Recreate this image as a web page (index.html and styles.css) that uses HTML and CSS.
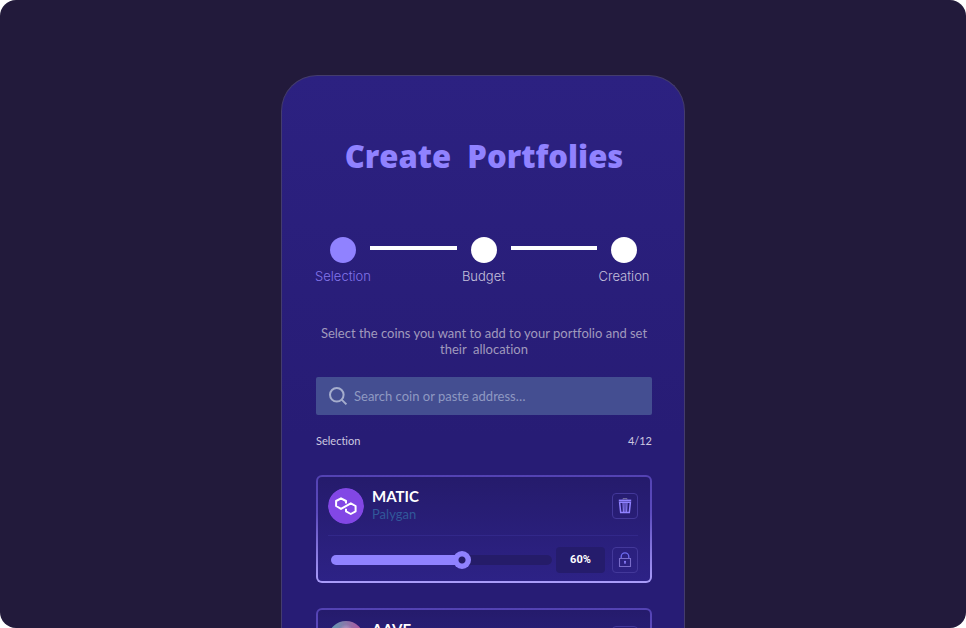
FILE: index.html
```html
<!DOCTYPE html>
<html lang="en">
<head>
<meta charset="utf-8">
<meta name="viewport" content="width=device-width, initial-scale=1">
<title>Create Portfolies</title>
<link rel="stylesheet" href="styles.css">
</head>
<body>
<div class="stage">
  <main class="panel">
    <h1 class="title">Create&nbsp; Portfolies</h1>

    <ol class="steps">
      <li class="step step-active"><span class="dot"></span><span class="step-label">Selection</span></li>
      <li class="bar" aria-hidden="true"></li>
      <li class="step"><span class="dot"></span><span class="step-label">Budget</span></li>
      <li class="bar" aria-hidden="true"></li>
      <li class="step"><span class="dot"></span><span class="step-label">Creation</span></li>
    </ol>

    <p class="intro">Select the coins you want to add to your portfolio and set their&nbsp; allocation</p>

    <label class="search">
      <svg class="search-icon" viewBox="0 0 18 18" aria-hidden="true"><circle cx="7.8" cy="7.8" r="6.8"/><path d="M12.6 12.6 17.4 17.4"/></svg>
      <input type="text" placeholder="Search coin or paste address…" aria-label="Search coin or paste address">
    </label>

    <div class="summary"><span>Selection</span><span>4/12</span></div>

    <section class="card">
      <div class="coin">
        <svg class="avatar" viewBox="0 0 36 36" aria-hidden="true">
          <circle cx="18" cy="18" r="18" fill="#8247e5"/>
          <path d="M18 15.4V13L13 10.3 8.1 13V18L13 20.9 22.8 15.3 27.6 18V23.3L22.8 26 18 23.3V20.8" fill="none" stroke="#fff" stroke-width="2" stroke-linejoin="round"/>
        </svg>
        <div class="names"><h2 class="symbol">MATIC</h2><p class="name">Palygan</p></div>
        <button class="icon-button" type="button" aria-label="Remove MATIC">
          <svg viewBox="0 0 14 16" aria-hidden="true"><path d="M5 1.5V.6h4v.9" fill="none" stroke="#76709f"/><path d="M.8 2.4h12.4" fill="none" stroke="#9082ff" stroke-width="1.6"/><path d="M1.6 4.2 2.7 14.6h8.6L12.4 4.2z" fill="none" stroke="#9082ff" stroke-width="1.5"/><path d="M5 4.2l.4 10.4M9 4.2l-.4 10.4M7 4.2v10.4" fill="none" stroke="#9082ff" stroke-width="1.1"/></svg>
        </button>
      </div>
      <div class="allocation">
        <input class="slider" type="range" min="0" max="100" value="60" aria-label="MATIC allocation">
        <output class="percent">60%</output>
        <button class="icon-button" type="button" aria-label="Lock MATIC">
          <svg viewBox="0 0 14 16" aria-hidden="true"><path d="M3.2 6.4V4.7a3.8 3.8 0 0 1 7.6 0v1.7" fill="none" stroke="#6e6cf0" stroke-width="1.3"/><path d="M1.5 6.5h11v8h-11z" fill="none" stroke="#796cc9" stroke-width="1.1"/><circle cx="7" cy="9.8" r="1" fill="#9082ff"/><path d="M7 10v2" stroke="#9082ff"/></svg>
        </button>
      </div>
    </section>

    <section class="card">
      <div class="coin">
        <span class="avatar avatar-aave"></span>
        <div class="names"><h2 class="symbol">AAVE</h2></div>
        <button class="icon-button" type="button" aria-label="Remove AAVE"></button>
      </div>
    </section>
  </main>
</div>
</body>
</html>
```
FILE: styles.css
```css
* { box-sizing: border-box; }

body {
  margin: 0;
  background: #fff;
  font-family: Lato, sans-serif;
  font-variant-ligatures: none;
}

h1, h2, p, ol { margin: 0; padding: 0; }

.stage {
  height: 100vh;
  overflow: hidden;
  padding: 75px 16px 0;
  border-radius: 16px;
  background: #221a3b;
}

.panel {
  max-width: 404px;
  min-height: 100%;
  margin: 0 auto;
  padding: 56px 32px 40px 34px;
  border: 1px solid #443c6d;
  border-bottom: 0;
  border-radius: 36px 36px 0 0;
  background: linear-gradient(#2c2181, #271c75 360px);
}

.title {
  color: #9082ff;
  font: 800 31px/48px "Open Sans", sans-serif;
  text-align: center;
  white-space: nowrap;
}

.steps {
  display: flex;
  margin-top: 57px;
  padding-right: 1px;
  list-style: none;
}

.step {
  display: flex;
  flex: 0 0 54px;
  min-width: 0;
  flex-direction: column;
  align-items: center;
  gap: 4px;
  color: #c5c0dc;
  font: 300 13px/18px Inter, sans-serif;
}

.dot {
  width: 26px;
  height: 26px;
  border-radius: 50%;
  background: #fff;
}

.step-active { color: #8375eb; }
.step-active .dot { background: #9082ff; }

.bar {
  flex: 1;
  height: 4px;
  margin-top: 9px;
  background: #fff;
}

.intro {
  margin-top: 40px;
  color: #a09abd;
  font-size: 13px;
  line-height: 16px;
  text-align: center;
}

.search {
  display: flex;
  align-items: center;
  gap: 7px;
  height: 38px;
  margin-top: 20px;
  padding: 0 13px;
  border-radius: 2px;
  background: #444e91;
}

.search-icon {
  width: 18px;
  height: 18px;
  overflow: visible;
  fill: none;
  stroke: #a5adcd;
  stroke-width: 2;
}

.search input {
  flex: 1;
  min-width: 0;
  padding: 0;
  border: 0;
  outline: 0;
  background: none;
  color: #fff;
  font: 13px/18px Lato, sans-serif;
}

.search input::placeholder { color: #8f99c2; opacity: 1; }

.summary {
  display: flex;
  justify-content: space-between;
  margin: 18px 0 26px;
  color: #cdc9e0;
  font-size: 11px;
  line-height: 16px;
}

.card {
  margin-bottom: 25px;
  padding: 11px 12px 8px 10px;
  border: 2px solid transparent;
  border-radius: 6px;
  background:
    linear-gradient(#251b6c, #2d2286) padding-box,
    linear-gradient(#5342b3, #5c4bbd 35%, #aa9dfa) border-box;
}

.coin {
  display: flex;
  align-items: center;
  padding-bottom: 11px;
  border-bottom: 1px solid #32288a;
}

.avatar {
  flex: none;
  width: 36px;
  height: 36px;
  border-radius: 50%;
}

.avatar-aave {
  background: radial-gradient(circle at 50% 28%, #c7a5cf 0, transparent 22%), linear-gradient(90deg, #5aa0b5, #b6509e);
}

.names {
  flex: 1;
  align-self: flex-start;
  margin-left: 8px;
}

.symbol {
  color: #fff;
  font-size: 15px;
  font-weight: 700;
  line-height: 16px;
}

.name {
  color: #31589a;
  font-size: 13px;
  line-height: 20px;
}

.icon-button {
  display: grid;
  flex: none;
  place-items: center;
  width: 26px;
  height: 26px;
  padding: 0;
  border: 1px solid #43389a;
  border-radius: 4px;
  background: none;
}

.icon-button svg { width: 14px; height: 16px; }

.allocation {
  display: flex;
  align-items: center;
  padding: 11px 0 0 3px;
}

.slider {
  flex: 1;
  min-width: 0;
  height: 18px;
  margin: 0 4px 0 0;
  appearance: none;
  background: none;
}

.slider::-webkit-slider-runnable-track {
  height: 10px;
  border-radius: 5px;
  background: linear-gradient(90deg, #9082ff 60%, #251c69 60%);
}

.slider::-webkit-slider-thumb {
  appearance: none;
  width: 18px;
  height: 18px;
  margin-top: -4px;
  border-radius: 50%;
  background: radial-gradient(circle, #251c69 3px, #9082ff 4px);
}

.percent {
  width: 49px;
  margin-right: 7px;
  border-radius: 4px;
  background: #251c6c;
  color: #fff;
  font: 700 11px/26px Roboto, sans-serif;
  text-align: center;
}
```
